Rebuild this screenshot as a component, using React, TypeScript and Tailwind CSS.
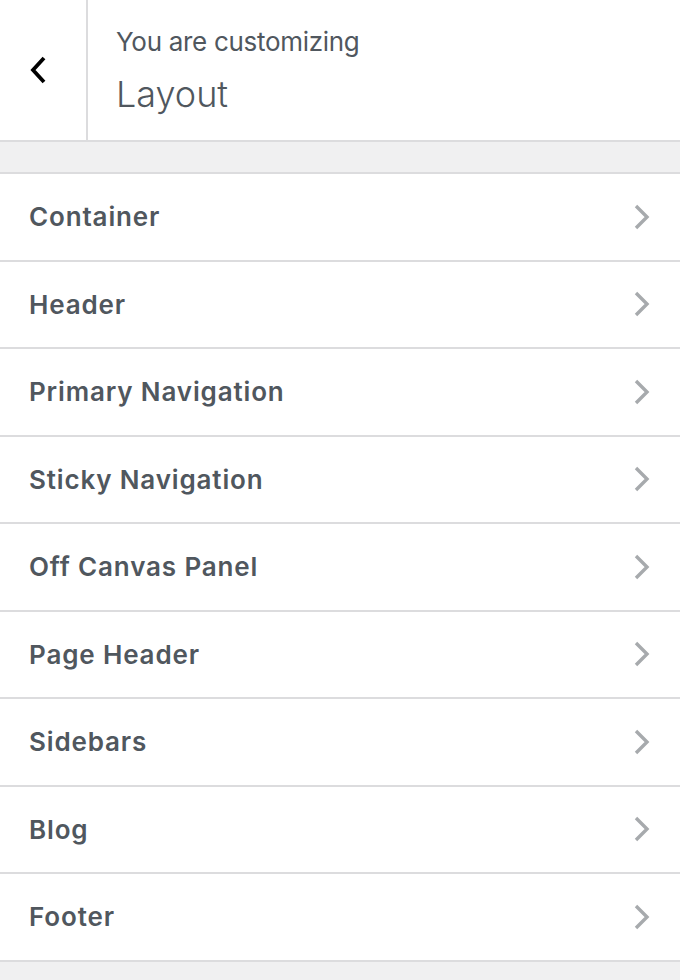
import React from "react";

const items = [
  "Container",
  "Header",
  "Primary Navigation",
  "Sticky Navigation",
  "Off Canvas Panel",
  "Page Header",
  "Sidebars",
  "Blog",
  "Footer",
];

export default function App() {
  return (
    <div
      className="w-[680px] h-[980px] bg-[#f0f0f1] overflow-hidden"
      style={{ fontFamily: "Inter, 'Noto Sans', sans-serif" }}
    >
      <div className="flex h-[142px] bg-white border-b-2 border-[#dcdcde]">
        <div className="w-[88px] shrink-0 border-r-2 border-[#dcdcde] flex items-center justify-center">
          <svg width="24" height="30" viewBox="0 0 24 30" className="ml-[-9px] mt-[-1px]">
            <path d="M17 3 L6 15 L17 27" fill="none" stroke="#000" strokeWidth="3.8" />
          </svg>
        </div>
        <div className="pl-[28px] pt-[23px] text-[#50575e]">
          <div className="text-[26px] leading-[38px] tracking-[-0.3px]">You are customizing</div>
          <div className="mt-[8px] text-[36px] leading-[50px] font-light">Layout</div>
        </div>
      </div>
      <div className="h-[32px] border-b-2 border-[#dcdcde]" />
      {items.map((it) => (
        <div
          key={it}
          className="h-[87.5px] bg-white border-b-2 border-[#dcdcde] flex items-center justify-between pl-[29px] pr-[28px]"
        >
          <span className="text-[26px] font-semibold text-[#50575e] tracking-[0.85px]">{it}</span>
          <svg width="20" height="28" viewBox="0 0 20 28">
            <path d="M4 3 L15 14 L4 25" fill="none" stroke="#a7aaad" strokeWidth="3.4" />
          </svg>
        </div>
      ))}
    </div>
  );
}
